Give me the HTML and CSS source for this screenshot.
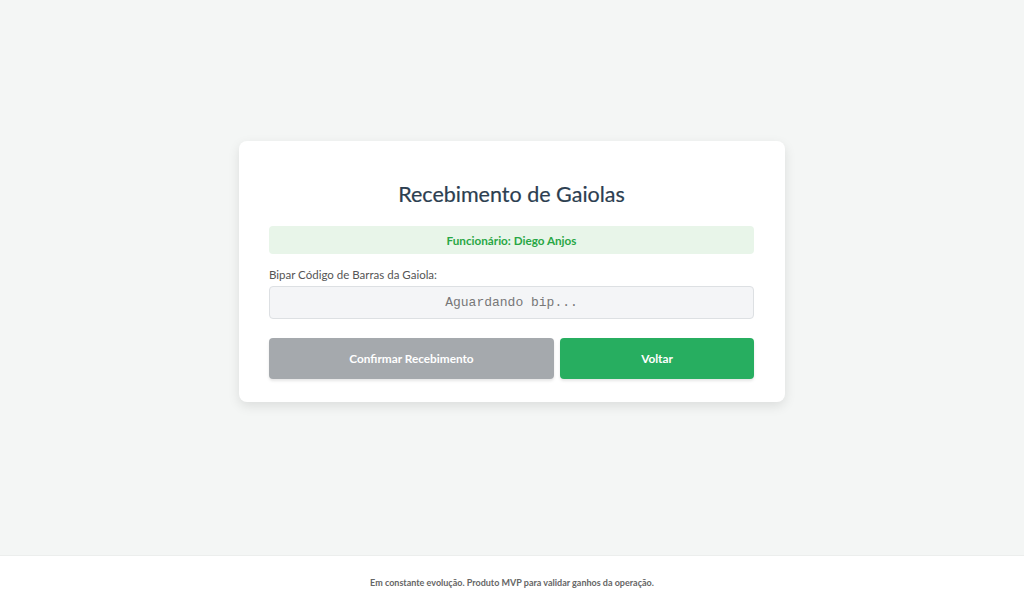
FILE: index.html
```html
<!DOCTYPE html>
<html lang="pt-BR">
<head>
<meta charset="utf-8">
<title>Recebimento de Gaiolas</title>
<link rel="stylesheet" href="styles.css">
</head>
<body>
<div class="page">
  <main class="main">
    <section class="card">
      <h1 class="title">Recebimento de Gaiolas</h1>
      <div class="info">Funcionário: Diego Anjos</div>
      <label class="label" for="codigo">Bipar Código de Barras da Gaiola:</label>
      <input class="input" id="codigo" type="text" placeholder="Aguardando bip...">
      <div class="actions">
        <button class="btn btn-confirm">Confirmar Recebimento</button>
        <button class="btn btn-back">Voltar</button>
      </div>
    </section>
  </main>
  <footer class="footer">Em constante evolução. Produto MVP para validar ganhos da operação.</footer>
</div>
</body>
</html>
```

FILE: styles.css
```css
* { box-sizing: border-box; }
html, body { margin: 0; height: 100%; }
body {
  font-family: Lato, "Open Sans", sans-serif;
  background: #f4f6f5;
  color: #333;
}
.page {
  height: 610px;
  display: flex;
  flex-direction: column;
}
.main {
  flex: 1;
  display: flex;
  align-items: center;
  justify-content: center;
  padding-bottom: 12px;
}
.card {
  width: 546px;
  background: #fff;
  border-radius: 8px;
  box-shadow: 0 4px 12px rgba(0,0,0,0.1);
  padding: 38px 31px 23px 30px;
  display: flex;
  flex-direction: column;
}
.title {
  margin: 0 0 17px;
  text-align: center;
  font-size: 21.5px;
  font-weight: 400;
  color: #2c3e50;
  line-height: 30px;
  -webkit-text-stroke: 0.2px #2c3e50;
}
.info {
  background: #e8f5e9;
  color: #28a745;
  font-weight: 700;
  font-size: 11.7px;
  text-align: center;
  height: 28px;
  line-height: 28px;
  border-radius: 4px;
  margin-bottom: 13px;
}
.label {
  font-size: 11.5px;
  color: #555;
  line-height: 16px;
  margin-bottom: 3px;
}
.input {
  height: 33px;
  border: 1px solid #dde0e3;
  border-radius: 4px;
  background: #f4f5f7;
  font-family: "Liberation Mono", monospace;
  font-size: 13px;
  text-align: center;
  color: #555;
  padding: 0 8px;
}
.input::placeholder { color: #777; }
.actions {
  display: flex;
  gap: 6px;
  margin-top: 19px;
}
.btn {
  height: 41px;
  border: none;
  border-radius: 4px;
  color: #fff;
  font-family: Lato, "Open Sans", sans-serif;
  font-weight: 700;
  font-size: 11.8px;
  box-shadow: 0 2px 3px rgba(0,0,0,0.1);
}
.btn-confirm { flex: 3; background: #a5a9ad; }
.btn-back { flex: 2; background: #27ae60; }
.footer {
  height: 55px;
  background: #fff;
  border-top: 1px solid #eceeed;
  text-align: center;
  font-size: 9px;
  font-weight: 700;
  color: #666;
  line-height: 54px;
}
```
